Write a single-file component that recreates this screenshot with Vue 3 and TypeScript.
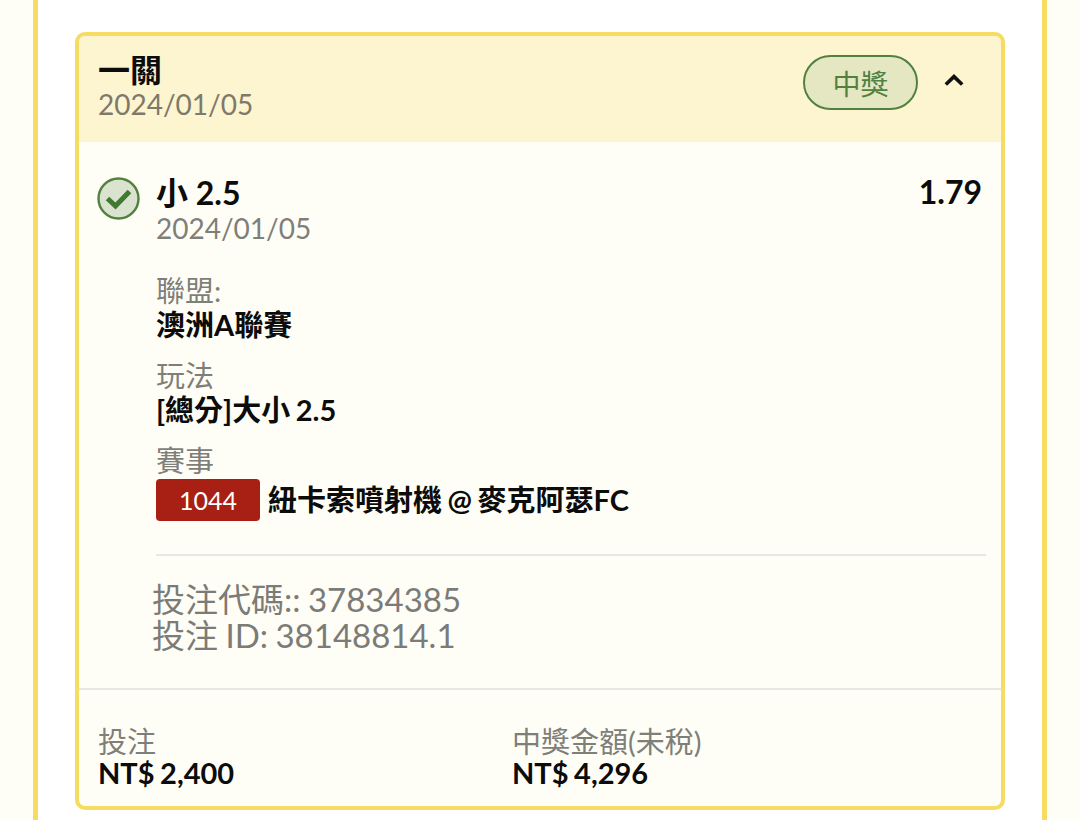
<script setup lang="ts">
const fields = [
  { label: '聯盟:', value: '澳洲A聯賽' },
  { label: '玩法', value: '[總分]大小 2.5' },
]
</script>

<template>
  <div class="page">
    <div class="shell">
      <section class="card">
        <header class="head">
          <div class="head-text">
            <div class="title">一關</div>
            <div class="date">2024/01/05</div>
          </div>
          <span class="badge">中獎</span>
          <svg class="chevron" width="20" height="14" viewBox="0 0 20 14" fill="none">
            <path d="M1.8 11.5 L10 3.6 L18.2 11.5" stroke="#111" stroke-width="3.6" />
          </svg>
        </header>

        <div class="body">
          <div class="pick">
            <svg class="check" width="43" height="43" viewBox="0 0 43 43" fill="none">
              <circle cx="21.5" cy="21.5" r="20" fill="#d9e3cf" stroke="#52803f" stroke-width="2.4" />
              <path d="M10.5 21.5 L18.5 29 L32.5 14.5" stroke="#3f7a30" stroke-width="5" />
            </svg>
            <div class="pick-main">
              <div class="pick-row">
                <span class="pick-name">小 2.5</span>
                <span class="odds">1.79</span>
              </div>
              <div class="date pick-date">2024/01/05</div>
              <div v-for="f in fields" :key="f.label" class="field">
                <div class="label">{{ f.label }}</div>
                <div class="value">{{ f.value }}</div>
              </div>
              <div class="field">
                <div class="label">賽事</div>
                <div class="match">
                  <span class="code">1044</span>
                  <span class="value">紐卡索噴射機 @ 麥克阿瑟FC</span>
                </div>
              </div>
              <div class="rule"></div>
              <div class="ids">
                <div>投注代碼:: 37834385</div>
                <div>投注 ID: 38148814.1</div>
              </div>
            </div>
          </div>
        </div>

        <footer class="foot">
          <div class="foot-col">
            <div class="label">投注</div>
            <div class="value">NT$ 2,400</div>
          </div>
          <div class="foot-col">
            <div class="label">中獎金額(未稅)</div>
            <div class="value">NT$ 4,296</div>
          </div>
        </footer>
      </section>
    </div>
  </div>
</template>

<style scoped>
.page {
  width: 1080px;
  height: 820px;
  overflow: hidden;
  background: #fffef6;
  padding: 0 33px;
  box-sizing: border-box;
  font-family: Lato, "Noto Sans CJK TC", sans-serif;
  color: #0c0c0c;
}
.shell {
  height: 100%;
  background: #fff;
  border-left: 5px solid #f6dc62;
  border-right: 5px solid #f6dc62;
  padding: 32px 37px 0;
  box-sizing: border-box;
}
.card {
  width: 930px;
  height: 778px;
  box-sizing: border-box;
  border: 4px solid #f6dc62;
  border-radius: 10px;
  background: #fffef6;
  display: flex;
  flex-direction: column;
  overflow: hidden;
}
.head {
  height: 106px;
  flex: none;
  box-sizing: border-box;
  background: #fdf4d0;
  padding: 0 37px 0 19px;
  display: flex;
  align-items: flex-start;
}
.head-text {
  flex: 1;
  padding-top: 15px;
}
.title {
  font-size: 32px;
  line-height: 38px;
  font-weight: 700;
}
.date {
  font-size: 28px;
  line-height: 31px;
  color: #7d7a6a;
}
.badge {
  margin-top: 19px;
  width: 115px;
  height: 55px;
  box-sizing: border-box;
  border: 2px solid #52803f;
  border-radius: 28px;
  background: #e5e7c3;
  color: #52803f;
  font-size: 28px;
  display: flex;
  align-items: center;
  justify-content: center;
}
.chevron {
  margin: 37px 0 0 26px;
}
.body {
  height: 548px;
  flex: none;
  box-sizing: border-box;
  padding: 35px 15px 0 18px;
  border-bottom: 2px solid #e8e8e2;
}
.pick {
  display: flex;
  gap: 16px;
}
.check {
  flex: none;
}
.pick-main {
  flex: 1;
}
.pick-row {
  display: flex;
  justify-content: space-between;
  align-items: center;
  height: 28px;
  padding-right: 4px;
}
.pick-name,
.odds {
  font-size: 32px;
  font-weight: 700;
}
.pick-date {
  color: #7f7f7a;
  margin-top: 8px;
}
.field {
  margin-top: 16px;
}
.pick-date + .field {
  margin-top: 29px;
}
.label {
  font-size: 29px;
  line-height: 35px;
  color: #7f7f7a;
}
.value {
  font-size: 29px;
  line-height: 34px;
  font-weight: 700;
  word-spacing: -1.5px;
}
.match {
  display: flex;
  align-items: center;
  gap: 8px;
  height: 42px;
  margin-top: 1px;
}
.code {
  width: 104px;
  height: 42px;
  box-sizing: border-box;
  background: #a81f14;
  border-radius: 4px;
  color: #fff;
  font-size: 25px;
  display: flex;
  align-items: center;
  justify-content: center;
}
.rule {
  height: 2px;
  background: #e8e8e2;
  margin-top: 33px;
}
.ids {
  margin: 25px 0 0 -4px;
  font-size: 33px;
  line-height: 36px;
  color: #7b7b78;
  word-spacing: -1px;
}
.foot {
  flex: 1;
  display: flex;
  padding: 38px 19px 0;
}
.foot-col {
  width: 414px;
}
.foot-col .label {
  line-height: 28px;
}
</style>
